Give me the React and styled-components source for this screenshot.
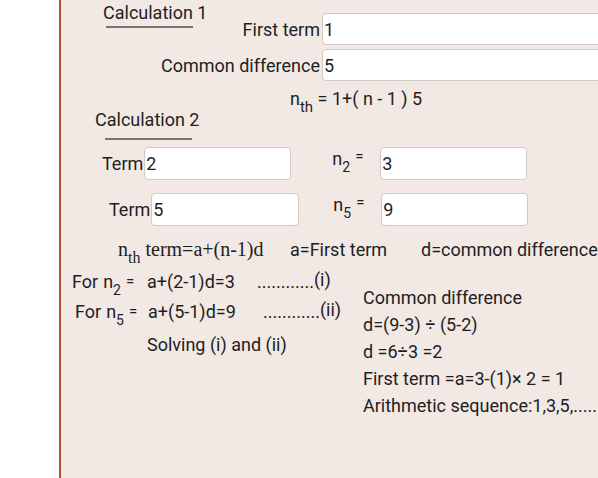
import React from 'react';
import styled, { createGlobalStyle } from 'styled-components';

const GlobalStyle = createGlobalStyle`
  html, body {
    margin: 0;
    background: #fff;
  }
  body {
    font-family: Roboto, "Liberation Sans", sans-serif;
  }
`;

const App = () => {
  return (
    <Page>
      <GlobalStyle />
      <Panel>
        <TopBlock>
          <HeadCol $top={2}>
            <Heading $indent={42}>Calculation 1</Heading>
            <Rule $gap={3} $indent={45} />
          </HeadCol>
          <FieldGrid>
            <Label>First term</Label>
            <Field $w={300} defaultValue="1" />
            <Label>Common difference</Label>
            <Field $w={300} defaultValue="5" />
          </FieldGrid>
        </TopBlock>

        <Line $indent={229} $top={7}>
          n<Sub $big>th</Sub> = 1+( n - 1 ) 5
        </Line>

        <Heading $indent={34}>Calculation 2</Heading>
        <Rule $gap={8} $indent={44} />

        <TermRow $indent={41} $top={7}>
          <span>Term</span>
          <Field $w={147} $h={33} defaultValue="2" />
          <NLabel $gap={41}>
            n<Sub>2</Sub>
            <SmallEq $lift={4}>=</SmallEq>
          </NLabel>
          <Field $w={147} $h={33} defaultValue="3" />
        </TermRow>

        <TermRow $indent={48} $top={13}>
          <span>Term</span>
          <Field $w={148} $h={33} defaultValue="5" />
          <NLabel $gap={34}>
            n<Sub>5</Sub>
            <SmallEq $lift={4}>=</SmallEq>
          </NLabel>
          <Field $w={147} $h={33} defaultValue="9" />
        </TermRow>

        <Line $indent={57} $top={13}>
          <Cell $w={172}>
            <Serif>
              n<SerifSub>th</SerifSub> term=a+(n-1)d
            </Serif>
          </Cell>
          <Cell $w={131}>a=First term</Cell>
          <Cell>d=common difference</Cell>
        </Line>

        <Bottom>
          <Steps>
            <StepRow $indent={11} $top={0}>
              <Cell $w={75}>
                For<NMark>n</NMark>
                <Sub>2</Sub>
                <SmallEq $lift={2}>=</SmallEq>
              </Cell>
              <Cell $w={110}>a+(2-1)d=3</Cell>
              <Dots>............</Dots>
              <Tag>(i)</Tag>
            </StepRow>
            <StepRow $indent={14} $top={9}>
              <Cell $w={73}>
                For<NMark>n</NMark>
                <Sub>5</Sub>
                <SmallEq $lift={2}>=</SmallEq>
              </Cell>
              <Cell $w={115}>a+(5-1)d=9</Cell>
              <Dots>............</Dots>
              <Tag>(ii)</Tag>
            </StepRow>
            <StepRow $indent={86} $top={14}>
              Solving (i) and (ii)
            </StepRow>
          </Steps>
          <Notes>
            <div>Common difference</div>
            <div>d=(9-3) ÷ (5-2)</div>
            <div>d =6÷3 =2</div>
            <div>First term =a=3-(1)× 2 = 1</div>
            <div>Arithmetic sequence:1,3,5,.....</div>
          </Notes>
        </Bottom>
      </Panel>
    </Page>
  );
};

export default App;

const Page = styled.div`
  display: flex;
  width: 598px;
  height: 478px;
  overflow: hidden;
`;

const Panel = styled.div`
  flex: 1;
  margin-left: 59px;
  border-left: 2px solid #b4522a;
  background-color: #f2e9e5;
  color: #1e1e1e;
  font-size: 18px;
  line-height: 21px;
  white-space: nowrap;
  overflow: hidden;
`;

const TopBlock = styled.div`
  display: flex;
`;

const HeadCol = styled.div`
  width: 100px;
  flex-shrink: 0;
  padding-top: ${(props) => props.$top}px;
`;

const Heading = styled.div`
  height: 21px;
  padding-left: ${(props) => props.$indent}px;
`;

const Rule = styled.div`
  width: 87px;
  height: 2px;
  margin: ${(props) => props.$gap}px 0 0 ${(props) => props.$indent}px;
  background-color: #7a7370;
`;

const FieldGrid = styled.div`
  display: grid;
  grid-template-columns: auto 300px;
  column-gap: 1px;
  row-gap: 4px;
  align-items: center;
  margin-top: 13px;
  flex-shrink: 0;
`;

const Label = styled.label`
  text-align: right;
`;

const Field = styled.input`
  box-sizing: border-box;
  width: ${(props) => props.$w}px;
  height: ${(props) => props.$h || 32}px;
  margin: 0 0 0 1px;
  padding: 0 1px;
  border: 1px solid #cfcac8;
  border-radius: 4px;
  background-color: #fff;
  color: inherit;
  font: inherit;
  outline: none;
`;

const Line = styled.div`
  height: 21px;
  margin-top: ${(props) => props.$top}px;
  padding-left: ${(props) => props.$indent}px;
`;

const Sub = styled.span`
  font-size: ${(props) => (props.$big ? 15 : 14)}px;
  line-height: 0;
  vertical-align: -7px;
`;

const SmallEq = styled.span`
  margin-left: 5px;
  font-size: 15px;
  line-height: 0;
  vertical-align: ${(props) => props.$lift}px;
`;

const TermRow = styled.div`
  display: flex;
  align-items: center;
  height: 33px;
  margin-top: ${(props) => props.$top}px;
  padding-left: ${(props) => props.$indent}px;
`;

const NLabel = styled.span`
  width: 47px;
  margin: 0 0 10px ${(props) => props.$gap}px;
`;

const Cell = styled.span`
  display: inline-block;
  width: ${(props) => (props.$w ? props.$w + 'px' : 'auto')};
`;

const Serif = styled.span`
  font-family: "Liberation Serif", "DejaVu Serif", serif;
  font-size: 20px;
`;

const SerifSub = styled.span`
  font-size: 16px;
  line-height: 0;
  vertical-align: -7px;
`;

const Bottom = styled.div`
  display: flex;
  margin-top: 9px;
`;

const Steps = styled.div`
  width: 302px;
  flex-shrink: 0;
`;

const StepRow = styled.div`
  height: 21px;
  margin-top: ${(props) => props.$top}px;
  padding-left: ${(props) => props.$indent}px;
`;

const NMark = styled.span`
  margin-left: 5px;
`;

const Dots = styled.span`
  letter-spacing: 0;
`;

const Tag = styled.span`
  vertical-align: 2px;
`;

const Notes = styled.div`
  padding-top: 15px;
  line-height: 27px;
`;
